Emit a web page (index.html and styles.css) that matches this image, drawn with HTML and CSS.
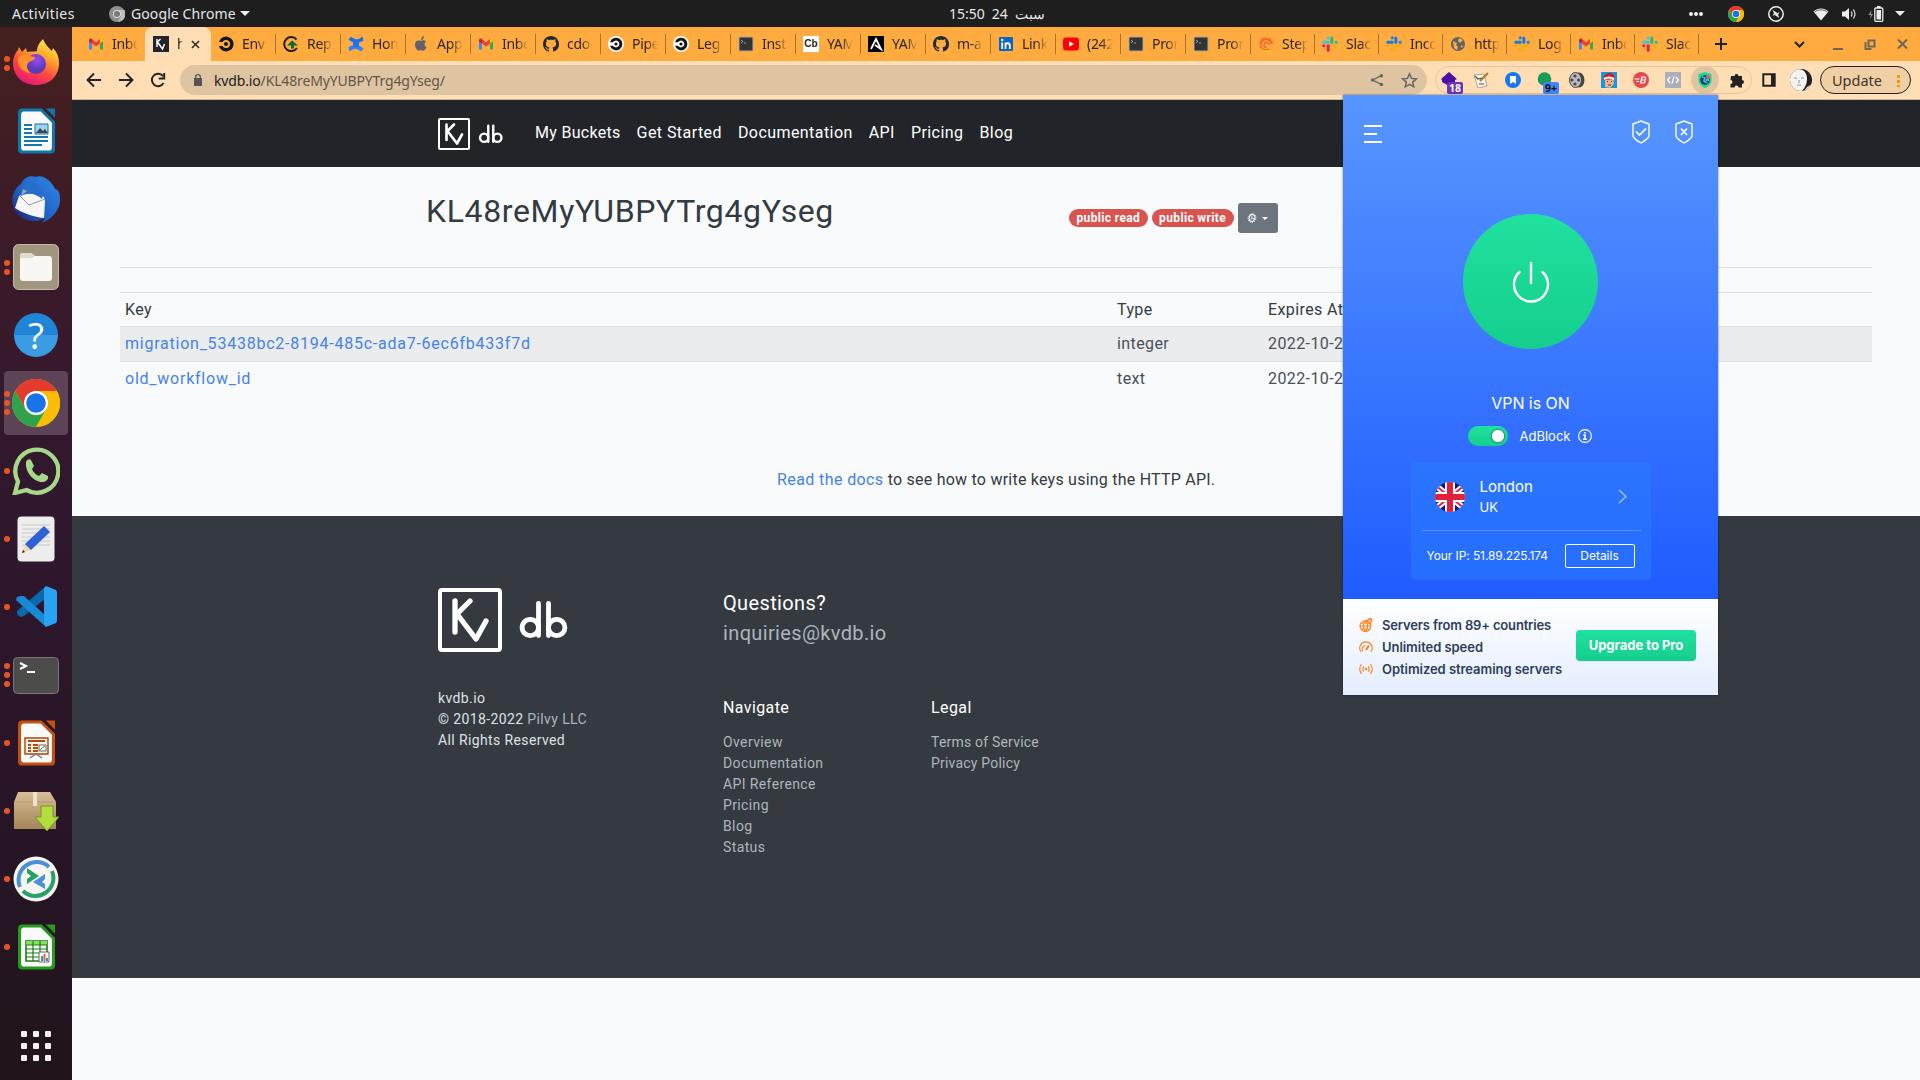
FILE: index.html
```html
<!DOCTYPE html>
<html lang="en">
<head>
<meta charset="utf-8">
<title>kvdb.io</title>
<link rel="stylesheet" href="styles.css">
</head>
<body>
<svg class="defs" aria-hidden="true">
  <defs>
    <linearGradient id="ff" x1=".8" y1="0" x2=".3" y2="1"><stop offset="0" stop-color="#fff44f"/><stop offset=".35" stop-color="#ffa72b"/><stop offset=".65" stop-color="#ff4a3d"/><stop offset="1" stop-color="#e3157b"/></linearGradient>
    <radialGradient id="ffp" cx=".55" cy=".3"><stop offset="0" stop-color="#a04bf5"/><stop offset="1" stop-color="#5a3bb8"/></radialGradient>
    <linearGradient id="tb" x1="1" y1="0" x2="0" y2="1"><stop offset="0" stop-color="#2f8ae8"/><stop offset=".6" stop-color="#1f5fc0"/><stop offset="1" stop-color="#20115a"/></linearGradient>
    <linearGradient id="box" x1="0" y1="0" x2="0" y2="1"><stop offset="0" stop-color="#d8bd96"/><stop offset="1" stop-color="#a5865a"/></linearGradient>
    <clipPath id="round"><circle cx="15" cy="15" r="15"/></clipPath>
    <clipPath id="face"><circle cx="11" cy="11" r="11"/></clipPath>
    <symbol id="gmail" viewBox="0 0 16 16"><path d="M1 4v9.5h3V6.5z" fill="#4285f4"/><path d="M15 4v9.5h-3V6.5z" fill="#34a853"/><path d="M1 4.2C1 2.4 3 2 4 3v4.6L1 5.5z" fill="#c5221f"/><path d="M15 4.2C15 2.400 13 2 12 3v4.600l3-2.100z" fill="#fbbc04"/><path d="M4 3l4 3.200L12 3v4.600L8 10.600 4 7.600z" fill="#ea4335"/></symbol>
    <symbol id="kv" viewBox="0 0 16 16"><rect width="16" height="16" fill="#212529"/><path d="M4 3v8M7.500 3L4.500 6l5 7L11.500 8" fill="none" stroke="#fff" stroke-width="1.500"/></symbol>
    <symbol id="circleci" viewBox="0 0 16 16"><path d="M1 6a7.400 7.400 0 1 1 0 4h3.400a4.100 4.100 0 1 0 0-4z" fill="#161616"/><circle cx="8" cy="8" r="2" fill="#161616"/></symbol>
    <symbol id="circlew" viewBox="0 0 16 16"><circle cx="8" cy="8" r="8" fill="#fff"/><path d="M2 6.300a6.300 6.300 0 1 1 0 3.400h3a3.400 3.400 0 1 0 0-3.400z" fill="#161616"/><circle cx="8" cy="8" r="1.600" fill="#161616"/></symbol>
    <symbol id="rep" viewBox="0 0 16 16"><path d="M13.500 3.500A7 7 0 1 0 14 12" fill="none" stroke="#222" stroke-width="2"/><path d="M4 9.500l5-5 6 5h-4v3H8v-3z" fill="#0b6b35"/></symbol>
    <symbol id="conf" viewBox="0 0 16 16"><path d="M.5 3.500L3 .5c4 3 6 4.500 11.500 0L15.500 4.500C9 8.500 5 7 .5 3.500z" fill="#1c6ee8"/><path d="M15.500 12.500L13 15.500c-4-3-6-4.500-11.500 0L.5 11.500c6.500-4 10.500-2.500 15 1z" fill="#2684ff"/><path d="M5 5h6v6H5z" fill="#1f74ef"/></symbol>
    <symbol id="apple" viewBox="0 0 16 16"><path d="M8 5c2-1.500 4-.8 5 .6-2.200 1.600-1.800 4.500.5 5.500-1 3-2.800 4.200-4 3.500-1-.5-1.800-.5-2.800 0C4 15.400 1 10.500 2.300 7 3.200 4.500 5.800 4 8 5zM8 4c0-2 1.200-3.500 3-4 .2 2-1.300 4-3 4z" fill="#62606a"/></symbol>
    <symbol id="github" viewBox="0 0 16 16"><path fill="#24292f" d="M8 0C3.580 0 0 3.580 0 8c0 3.540 2.290 6.530 5.470 7.590.4.070.55-.17.55-.38 0-.19-.01-.82-.01-1.490-2.010.37-2.530-.49-2.690-.94-.09-.23-.48-.94-.82-1.130-.28-.15-.68-.52-.01-.53.63-.01 1.080.58 1.230.82.72 1.210 1.870.87 2.330.66.070-.52.28-.87.51-1.070-1.780-.2-3.640-.89-3.640-3.950 0-.87.31-1.590.82-2.150-.08-.2-.36-1.020.08-2.120 0 0 .67-.21 2.200.82.64-.18 1.320-.27 2-.27s1.360.09 2 .27c1.530-1.040 2.200-.82 2.200-.82.44 1.100.16 1.920.08 2.120.51.56.82 1.270.82 2.150 0 3.070-1.870 3.750-3.650 3.950.29.25.54.73.54 1.480 0 1.070-.01 1.930-.01 2.200 0 .21.15.46.55.38A8.010 8.010 0 0 0 16 8c0-4.420-3.580-8-8-8z"/></symbol>
    <symbol id="termi" viewBox="0 0 16 16"><rect x="1" y="1" width="14" height="14" rx="1" fill="#333" stroke="#a9a9a0" stroke-width="1"/><path d="M3 4l2 1.500L3 7M6 7h2" fill="none" stroke="#bbb" stroke-width=".8"/></symbol>
    <symbol id="ans" viewBox="0 0 16 16"><rect width="16" height="16"/><path d="M3 13L8 3l5 10-6-4" fill="none" stroke="#fff" stroke-width="1.800"/></symbol>
    <symbol id="linkedin" viewBox="0 0 16 16"><rect x="1" y="1" width="14" height="14" rx="1" fill="#0a66c2"/><path d="M4.200 6.500V13M7.500 13V6.500M7.500 9.500c0-3 4.300-3 4.300 0V13" fill="none" stroke="#fff" stroke-width="1.800"/><circle cx="4.200" cy="4" r="1.200" fill="#fff"/></symbol>
    <symbol id="yt" viewBox="0 0 16 16"><rect y="1.500" width="16" height="13" rx="3" fill="#f00"/><path d="M6.200 5.200v5.600L11 8z" fill="#fff"/></symbol>
    <symbol id="grafana" viewBox="0 0 16 16"><path d="M8 1l2 1.500 2.500-.5.500 2.500L15.500 6l-1.500 2.500-1.500-.5a4.500 4.500 0 1 0-2 4.500l1.500 1c-3 2-7 1-8.500-1.500l-2-1 1-2.500L1 6l2-1 .5-3L6 2.500z" fill="#f4682a"/><path d="M11 9a2.500 2.500 0 1 0-2.500 2.500" fill="none" stroke="#f4682a" stroke-width="1.300"/><path d="M4 15.200h8" stroke="#ffd200" stroke-width="1.200"/></symbol>
    <symbol id="slack" viewBox="0 0 16 16"><g fill="none" stroke-width="3" stroke-linecap="round"><path d="M6.200 1.800v0M1.800 6.200h4.400" stroke="#36c5f0"/><path d="M9.800 2v4.200M14.200 6.200v0" stroke="#2eb67d"/><path d="M9.800 9.800h4.400M9.800 14.200v0" stroke="#ecb22e"/><path d="M6.200 9.800v4.400M1.800 9.800v0" stroke="#e01e5a"/></g></symbol>
    <symbol id="slackb" viewBox="0 0 16 16"><g fill="none" stroke-width="3" stroke-linecap="round"><path d="M6.200 1.800v0M1.800 6.200h4.400M9.800 2v4.200M14.200 6.200v0" stroke="#127be8"/><path d="M9.800 9.800h4.400M9.800 14.200v0M6.200 9.800v4.400M1.800 9.800v0" stroke="#eeb118"/></g></symbol>
    <symbol id="globe" viewBox="0 0 16 16"><circle cx="8" cy="8" r="7" fill="#5f6368"/><path d="M3 5l4 2-1 2 2 2-1 3-3-2zM9 2l4 2-3 3-2-2zM11 9l2.500 1-2 2z" fill="#ffab40"/></symbol>
    <symbol id="chrome" viewBox="0 0 48 48"><circle cx="24" cy="24" r="24" fill="#fbbc04"/><path d="M24 12h20.800A24 24 0 0 0 3.200 12l10.400 18z" fill="#e33b2e"/><path d="M3.200 12A24 24 0 0 0 24 48l10.400-18-10.400 6-10.400-6z" fill="#2fa24c"/><path d="M24 12h20.800A24 24 0 0 1 24 48l10.400-18z" fill="#fbbc04"/><circle cx="24" cy="24" r="12" fill="#fff"/><circle cx="24" cy="24" r="9.800" fill="#1a73e8"/></symbol>
    <symbol id="kvdb" viewBox="0 0 130 64"><rect x="2" y="2" width="60" height="60" rx="2" fill="none" stroke="#fff" stroke-width="4"/><g fill="none" stroke="#fff" stroke-width="5.300" stroke-linecap="round" stroke-linejoin="round"><path d="M17 13v31M32 13L19 26l19 25L48 33"/><g stroke-width="4.800"><circle cx="92.300" cy="39.500" r="8.200"/><path d="M100.500 15.500v32M110.500 15.500v32"/><circle cx="118.700" cy="39.500" r="8.200"/></g></g></symbol>
    <symbol id="doc" viewBox="0 0 36 44"><path d="M4 0h19l13 13v27a4 4 0 0 1-4 4H4a4 4 0 0 1-4-4V4a4 4 0 0 1 4-4z"/><path d="M27 0h9v9z"/><path d="M5 3h17l11 11v24a3 3 0 0 1-3 3H6a3 3 0 0 1-3-3V6a3 3 0 0 1 2-3z" fill="#fafafa"/></symbol>
  </defs>
</svg>
<div class="desktop">
  <header class="topbar">
    <span class="activities">Activities</span>
    <svg class="i16" viewBox="0 0 16 16"><circle cx="8" cy="8" r="8" fill="#8e8e8e"/><path d="M8 4h7.500A8 8 0 0 1 9 16l3-6z" fill="#bdbdbd"/><circle cx="8" cy="8" r="4" fill="#ddd"/><circle cx="8" cy="8" r="3" fill="#777"/></svg>
    <span class="appname">Google Chrome</span>
    <i class="caret"></i>
    <span class="clock"><span>15:50</span><span>24</span><span dir="rtl">سبت</span></span>
    <div class="tray">
      <svg class="t-dots" viewBox="0 0 16 16"><g fill="#eee"><circle cx="3" cy="8" r="2"/><circle cx="8" cy="8" r="2"/><circle cx="13" cy="8" r="2"/></g></svg>
      <svg class="t-chrome"><use href="#chrome"/></svg>
      <svg class="t-rem" viewBox="0 0 16 16"><circle cx="8" cy="8" r="7.200" fill="none" stroke="#eee" stroke-width="1.500"/><path d="M4.500 4l5 3-5 3 1.500-3zM11.500 6l-5 3 5 3-1.500-3z" fill="#eee"/></svg>
      <svg class="t-wifi" viewBox="0 0 16 16"><path d="M.5 5.500C4.500 1.500 11.500 1.500 15.500 5.500L8 14.500z" fill="#eee"/><path d="M1.500 6C5 3.200 11 3.200 14.500 6" fill="none" stroke="#555" stroke-width=".9"/></svg>
      <svg class="t-vol" viewBox="0 0 16 16"><path d="M1 5.500h3L8 2v12L4 10.500H1z" fill="#eee"/><path d="M10 5.500q2 2.500 0 5M12.300 3.500q3.400 4.500 0 9" fill="none" stroke="#ccc" stroke-width="1.300"/></svg>
      <svg class="t-bat" viewBox="0 0 16 16"><path d="M3.500 4L.5 9H3l-1 4 3-5H2.800z" fill="#999"/><rect x="6.800" y="2" width="8" height="13.300" rx="1" fill="none" stroke="#eee" stroke-width="1.300"/><path d="M8.500 4h4.600v9.500H8.500zM9 0h3.600v2H9z" fill="#eee"/></svg>
      <i class="caret"></i>
    </div>
  </header>
  <div class="below">
    <nav class="dock">
      <div class="app"><span class="dots"><i></i><i></i></span><svg class="up" width="46" height="46" viewBox="0 0 46 46"><path d="M23 46C9 46 0 36 0 24c0-5 2-10 5-13l1-3 3 5 4-4 1 4c5-1 8 0 10-1 0-5 3-9 6-12 3 7 6 9 9 12l1-3c4 4 6 9 6 15 0 13-9 22-23 22z" fill="url(#ff)"/><circle cx="23" cy="25" r="10" fill="url(#ffp)"/><path d="M5 19c4-4 8-4 11-2l6 1c0 3-4 4-6 5-4 4-1 9 1 11C9 33 4 27 5 19z" fill="#ff9328"/></svg></div>
      <div class="app"><svg width="37" height="46" fill="#0e76a8"><use href="#doc"/><path d="M6 17h8M6 21h8M6 25h8M6 29h24M6 33h24M6 37h18" stroke="#1477ad" stroke-width="1.800"/><path d="M17 16h13v10H17z" fill="#9fd4f0" stroke="#0e76a8"/><path d="M18 25l4-5 3 3 2-2 3 4z" fill="#444"/></svg></div>
      <div class="app"><svg width="48" height="48" viewBox="0 0 48 48"><path d="M9 9C12 2 18 0 24 2 30-1 40 6 43 14c5 1 5 7 5 12-1 10-8 18-18 22l3-5-8 3C12 47 1 40 0 25 1 18 4 12 9 9z" fill="url(#tb)"/><path d="M7 21c6-3 18-4 25 1l1 4-1 17C22 42 10 38 3 33z" fill="#f6f6f8"/><path d="M8 21l9 9 16-6" fill="none" stroke="#999" stroke-width="1"/><path d="M9 21C9 10 15 5 22 8c6 3 11 8 8 16-6-5-13-7-21-3z" fill="#256ec9"/><path d="M9 21l6-5-4-2z" fill="#9aa4b8"/></svg></div>
      <div class="app"><span class="dots"><i></i><i></i></span><svg width="46" height="46" viewBox="0 0 46 46"><rect x=".5" y=".5" width="45" height="45" rx="5" fill="#a0957f" stroke="#c3bba9"/><path d="M7 12q0-3 3-3h8l4 3h14q3 0 3 3v19q0 3-3 3H10q-3 0-3-3z" fill="#f8f7f4"/><path d="M7 12q0-3 3-3h8l4 3-3 2H7z" fill="#e2dccf"/></svg></div>
      <div class="app"><span class="help">?</span></div>
      <div class="app active"><span class="dots"><i></i><i></i><i></i></span><svg width="48" height="48"><use href="#chrome"/></svg></div>
      <div class="app"><span class="dots"><i></i></span><svg width="48" height="48" viewBox="0 0 48 48"><path d="M3 46l3-11.500A21.500 21.500 0 1 1 14.500 43z" fill="none" stroke="#a5d987" stroke-width="4.300"/><path d="M14 16c0-3 3-5 5-3l3 6-2 3c1 3 4 6 7 7l3-3 6 3c1 4-3 6-6 6-8 0-17-10-16-19z" fill="#a5d987"/></svg></div>
      <div class="app"><span class="dots"><i></i></span><svg width="38" height="46" viewBox="0 0 38 46"><rect x=".5" y=".5" width="37" height="45" rx="4" fill="#ededec"/><path d="M5 9h28M5 13h28M5 17h28M5 21h28M5 25h28M5 29h28" stroke="#c9c9c9"/><path d="M5 37l3-9 6 6z" fill="#f7d6b0"/><path d="M8 28L27 10l6 6-19 18z" fill="#2d61d8"/><path d="M5 37l1-3 2 2z" fill="#222"/></svg></div>
      <div class="app"><span class="dots"><i></i></span><svg width="43" height="42" viewBox="0 0 43 42"><path d="M31 0L2 25l0 3 3 3 4-1L31 12z" fill="#0a68ad"/><path d="M31 41L1 14l1-3 3-1 4 0 22 20z" fill="#168ad4"/><path d="M31 0l10 4q1 1 1 3v27q0 2-1 3l-10 4-2-3V3z" fill="#2aa2f4"/></svg></div>
      <div class="app"><span class="dots"><i></i><i></i><i></i></span><svg width="46" height="37" viewBox="0 0 46 37"><rect x=".5" y=".5" width="45" height="36" rx="4" fill="#4c4c4a" stroke="#777"/><path d="M7 6l6 3-6 3M14 15h8" fill="none" stroke="#fff" stroke-width="2"/></svg></div>
      <div class="app"><span class="dots"><i></i></span><svg width="37" height="46" fill="#c2500e"><use href="#doc"/><path d="M7 18h23v16H7z" fill="#fff4ea" stroke="#a8440c" stroke-width="1.400"/><path d="M10 21h17M10 25h3M10 28h3M10 31h3M15 25h5M15 28h5M15 31h5" stroke="#b34a10" stroke-width="2"/><path d="M21 25h7v6h-7z" fill="#fff" stroke="#666"/><path d="M22 30l2-2 3-2" fill="none" stroke="#2a9a3c"/><path d="M12 38l6-4 6 4" fill="none" stroke="#777" stroke-width="1.400"/></svg></div>
      <div class="app"><span class="dots"><i></i></span><svg width="46" height="40" viewBox="0 0 46 40"><path d="M5 1h32l6 10v27H1V11z" fill="url(#box)"/><path d="M1 11h42" stroke="#b59870"/><path d="M20 1h4v14h-4z" fill="#efe3cc"/><path d="M28 15h12v11h6L34 40 22 26h6z" fill="#b4dc3e" stroke="#6c9c1d"/></svg></div>
      <div class="app"><span class="dots"><i></i></span><svg width="46" height="46" viewBox="0 0 46 46"><circle cx="23" cy="23" r="22.500" fill="#f6f5f1"/><path d="M7 31A18 18 0 0 1 36 11" fill="none" stroke="#4a90d9" stroke-width="4"/><path d="M39 15A18 18 0 0 1 10 35" fill="none" stroke="#26a269" stroke-width="4"/><path d="M14 12l12 8-12 8v-5l4-3-4-3z" fill="#26a269"/><path d="M32 18l-12 8 12 7v-5l-3-2 3-3z" fill="#4a90d9"/></svg></div>
      <div class="app"><span class="dots"><i></i></span><svg width="37" height="46" fill="#259a1b"><use href="#doc"/><path d="M8 17h21v20H8z" fill="#fff" stroke="#1b7e12" stroke-width="1.600"/><path d="M8 17h21v4H8z" fill="#86e05e"/><path d="M8 21h21M8 25h21M8 29h21M8 33h21M15 17v20M22 17v20" stroke="#1b7e12" stroke-width="1.200"/><path d="M21 28h10v10H21z" fill="#fff" stroke="#666"/><path d="M24 37v-5M29 37v-3" stroke="#2a8fe0" stroke-width="2"/><path d="M26.500 37v-7" stroke="#e8601c" stroke-width="2"/></svg></div>
      <div class="grid9"><i></i><i></i><i></i><i></i><i></i><i></i><i></i><i></i><i></i></div>
    </nav>
    <div class="browser">
      <div class="tabs">
        <div class="tab first"><svg><use href="#gmail"/></svg><span>Inbox</span></div>
        <div class="tab current"><svg><use href="#kv"/></svg><span>h</span><svg class="x" viewBox="0 0 10 10"><path d="M1 1l8 8M9 1L1 9" stroke="#222" stroke-width="1.600"/></svg></div>
        <div class="tab"><svg><use href="#circleci"/></svg><span>Env</span></div>
        <div class="tab"><svg><use href="#rep"/></svg><span>Rep</span></div>
        <div class="tab"><svg><use href="#conf"/></svg><span>Hom</span></div>
        <div class="tab"><svg><use href="#apple"/></svg><span>App</span></div>
        <div class="tab"><svg><use href="#gmail"/></svg><span>Inbo</span></div>
        <div class="tab"><svg><use href="#github"/></svg><span>cdo</span></div>
        <div class="tab"><svg><use href="#circlew"/></svg><span>Pipe</span></div>
        <div class="tab"><svg><use href="#circlew"/></svg><span>Leg</span></div>
        <div class="tab"><svg><use href="#termi"/></svg><span>Inst</span></div>
        <div class="tab"><b class="cb">Cb</b><span>YAM</span></div>
        <div class="tab"><svg><use href="#ans"/></svg><span>YAM</span></div>
        <div class="tab"><svg><use href="#github"/></svg><span>m-a</span></div>
        <div class="tab"><svg><use href="#linkedin"/></svg><span>Link</span></div>
        <div class="tab"><svg><use href="#yt"/></svg><span>(242</span></div>
        <div class="tab"><svg><use href="#termi"/></svg><span>Pron</span></div>
        <div class="tab"><svg><use href="#termi"/></svg><span>Pron</span></div>
        <div class="tab n"><svg><use href="#grafana"/></svg><span>Step</span></div>
        <div class="tab n"><svg><use href="#slack"/></svg><span>Slac</span></div>
        <div class="tab n"><svg><use href="#slackb"/></svg><span>Inco</span></div>
        <div class="tab n"><svg><use href="#globe"/></svg><span>http</span></div>
        <div class="tab n"><svg><use href="#slackb"/></svg><span>Log</span></div>
        <div class="tab n"><svg><use href="#gmail"/></svg><span>Inbo</span></div>
        <div class="tab n"><svg><use href="#slack"/></svg><span>Slac</span></div>
        <svg class="plus" viewBox="0 0 12 12"><path d="M6 0v12M0 6h12" stroke="#222" stroke-width="2"/></svg>
        <svg class="wins" viewBox="0 0 114 16"><g fill="none" stroke="#6d6659" stroke-width="2"><path d="M1 6l4.500 4.500L10 6" stroke="#222"/><path d="M39 13h10M71.500 6v7h6M74.500 4.500h6v6h-6z"/><path d="M104 3.500l9 9M113 3.500l-9 9"/></g></svg>
      </div>
      <div class="toolbar">
        <svg class="nv" viewBox="0 0 16 16"><path d="M15 8H2M8 1.500L1.500 8 8 14.500"/></svg>
        <svg class="nv" viewBox="0 0 16 16"><path d="M1 8h13M8 1.500L14.500 8 8 14.500"/></svg>
        <svg class="nv" viewBox="0 0 16 16"><path d="M13.500 11A6.200 6.200 0 1 1 13 4.200M14.200 1v5.500H8.700"/></svg>
        <div class="omni">
          <svg width="10" height="12" viewBox="0 0 10 12"><rect x="1" y="4" width="8" height="8" fill="#555"/><path d="M2.700 4V2.700a2.300 2 0 0 1 4.600 0V4" fill="none" stroke="#555" stroke-width="1.300"/></svg>
          <span class="url"><b>kvdb.io</b>/KL48reMyYUBPYTrg4gYseg/</span>
          <svg class="share" viewBox="0 0 16 16"><path d="M13 3L3 8l10 5" fill="none" stroke="#666" stroke-width="1.500"/><g fill="#666"><circle cx="13" cy="3" r="2"/><circle cx="3" cy="8" r="2"/><circle cx="13" cy="13" r="2"/></g></svg>
          <svg class="star" viewBox="0 0 16 16"><path d="M8 1.800l1.900 4.200 4.500.5-3.400 3 1 4.500L8 11.700 4 14l1-4.500-3.400-3L6.100 6z" fill="none" stroke="#666" stroke-width="1.400"/></svg>
        </div>
        <div class="exts">
          <span><svg viewBox="0 0 16 16"><path d="M8 0l8 7-2 1v3L8 14 1 10V8L0 7z" fill="#4a0fa8"/></svg><em class="purple">18</em></span>
          <span><svg viewBox="0 0 16 16"><path d="M1 3l10-1 3 12-9 2z" fill="#f7f2e4" stroke="#888" stroke-width=".7"/><path d="M15 1L7 9" stroke="#b5761e" stroke-width="2" fill="none"/><path d="M2 4l3 3 4-1M6 12h5" stroke="#555" stroke-width="1.200" fill="none"/></svg></span>
          <span><svg viewBox="0 0 16 16"><circle cx="8" cy="8" r="8" fill="#1677f2"/><path d="M5 4h6v8L8 10l-3 2z" fill="#fff"/></svg></span>
          <span><svg viewBox="0 0 16 16"><circle cx="7.500" cy="7" r="6.800" fill="#179c58"/></svg><em class="blue">9+</em></span>
          <span><svg viewBox="0 0 16 16"><ellipse cx="10" cy="8" rx="5.500" ry="7.500" fill="#444"/><ellipse cx="6.500" cy="8" rx="6" ry="7.500" fill="#bbb" stroke="#444"/><g fill="#444"><circle cx="6" cy="4" r="1.600"/><circle cx="6" cy="12" r="1.600"/><circle cx="3" cy="8" r="1.500"/><circle cx="9.500" cy="8" r="1.500"/></g></svg></span>
          <span><svg viewBox="0 0 16 16"><rect width="16" height="16" fill="#1298e8"/><path d="M4 15V6h8l1 6-4 4z" fill="#f3b183"/><path d="M2 8C2 2 6 1 9 1s5 3 5 6z" fill="#d02027"/><path d="M3 7q5-3 10 0" stroke="#fff" stroke-width="2.200" fill="none"/><path d="M6 9.500h1M10 9.500h1M7 13h3" stroke="#632" stroke-width="1"/></svg></span>
          <span><svg viewBox="0 0 16 16"><circle cx="8" cy="8" r="8" fill="#e5484d"/><path d="M1.500 7h5M3 9.500h3M8 5h3.500c2 0 1 3-.5 3H8.500M11 8c2 0 1 3-.5 3H7.500L9 5" fill="none" stroke="#fff" stroke-width="1.200"/></svg></span>
          <span><svg viewBox="0 0 16 16"><rect width="16" height="16" fill="#a9b0ba"/><path d="M5 5L2.500 8 5 11M11 5l2.500 3L11 11M9 4.500l-2 7" fill="none" stroke="#fff" stroke-width="1.200"/></svg></span>
          <span class="hot"><svg viewBox="0 0 16 16"><path d="M8 0l6.500 2v6c0 4-3 6.500-6.500 8-3.500-1.500-6.500-4-6.500-8V2z" fill="#1ed89b"/><circle cx="8" cy="8" r="4.800" fill="#123d57"/><path d="M5 5l3 1-1 3 3 2M9 8h3" stroke="#29c8f0" stroke-width="1.800" fill="none"/><circle cx="11" cy="5" r="2" fill="#ff5a5a"/></svg></span>
          <span><svg viewBox="0 0 16 16"><path d="M2 4h3.500a2 2 0 1 1 4 0H13v4a2 2 0 1 1 0 4v3.500H9.500a2 2 0 0 0-4 0H1.500V12a2 2 0 0 0 0-4z" fill="#222"/></svg></span>
        </div>
        <svg class="side" viewBox="0 0 14 14"><path d="M1.300 1.300h11.400v11.400H1.300z" fill="none" stroke="#222" stroke-width="2"/><path d="M9 1h4v12H9z" fill="#222"/></svg>
        <svg class="avatar" viewBox="0 0 22 22"><g clip-path="url(#face)"><path d="M0 0h22v22H0z" fill="#202020"/><path d="M-1 0h10c6 1 8 5 8 10s-2 9-6 13H-1z" fill="#f3f3f3"/><path d="M17 18l5-3v7h-8z" fill="#ddd"/><path d="M4 9h3M11 9h3M7 16h4M9 11v3" stroke="#999" stroke-width="1.200"/></g></svg>
        <div class="update"><span>Update</span><i></i></div>
      </div>
      <main class="page">
        <header class="nav">
          <svg class="logo"><use href="#kvdb"/></svg>
          <a class="n1">My Buckets</a><a>Get Started</a><a>Documentation</a><a>API</a><a>Pricing</a><a>Blog</a>
        </header>
        <section class="head">
          <h1>KL48reMyYUBPYTrg4gYseg</h1>
          <div class="actions"><span class="badge">public read</span><span class="badge">public write</span><button class="gear"><svg width="10" height="10" viewBox="0 0 10 10"><g fill="none" stroke="#fff" transform="rotate(15 5 5)"><ellipse cx="5" cy="5" rx="2.800" ry="3.400"/><ellipse cx="5" cy="5" rx="3.900" ry="4.500" stroke-dasharray="1 1.200" stroke-width=".9"/><path d="M5 5h2.500M5 5L4 2.500M5 5L4 7.500" stroke-width=".7"/></g></svg><i></i></button></div>
        </section>
        <hr>
        <div class="table">
          <div class="row th"><span>Key</span><span>Type</span><span>Expires At</span></div>
          <div class="row odd"><a>migration_53438bc2-8194-485c-ada7-6ec6fb433f7d</a><span>integer</span><span>2022-10-24</span></div>
          <div class="row"><a>old_workflow_id</a><span>text</span><span>2022-10-24</span></div>
        </div>
        <p class="docs"><a>Read the docs</a> to see how to write keys using the HTTP API.</p>
        <footer class="foot">
          <div class="fcol brand">
            <svg class="flogo"><use href="#kvdb"/></svg>
            <p>kvdb.io<br>© 2018-2022 <a>Pilvy LLC</a><br><span>All Rights Reserved</span></p>
          </div>
          <div class="fright">
            <div class="ask">Questions?<br><a>inquiries@kvdb.io</a></div>
            <div class="links">
              <div class="lc"><h4>Navigate</h4><a>Overview</a><a>Documentation</a><a>API Reference</a><a>Pricing</a><a>Blog</a><a>Status</a></div>
              <div class="lc legal"><h4>Legal</h4><a>Terms of Service</a><a>Privacy Policy</a></div>
            </div>
          </div>
        </footer>
      </main>
    </div>
  </div>
  <aside class="vpn">
    <div class="vtop">
      <div class="vbar">
        <span class="burger"><i></i><i></i><i></i></span>
        <svg viewBox="0 0 18 24"><path d="M9 1l8 3v12q-1 3-8 7-7-4-8-7V4z"/><path d="M4 11.500l3.500 3.500L14 8.500" stroke-width="1.700"/></svg>
        <svg viewBox="0 0 18 24"><path d="M9 1l8 3v12q-1 3-8 7-7-4-8-7V4z"/><path d="M6 8.500l6 6.500M12 8.500L6 15" stroke-width="1.700"/></svg>
      </div>
      <div class="power"><svg width="38" height="42" viewBox="0 0 38 42"><path d="M19 2v20M7.500 11a17 17 0 1 0 23 0" fill="none" stroke="#fff" stroke-width="2.400" stroke-linecap="round"/></svg></div>
      <div class="status">VPN is ON</div>
      <div class="adb"><span class="tog"></span><span class="adt">AdBlock</span><svg width="14" height="14" viewBox="0 0 14 14"><circle cx="7" cy="7" r="6.400" fill="none" stroke="#fff" stroke-width="1.100"/><path d="M5.200 6H7v4M5 10.200h4M6.200 3.700h1.600" fill="none" stroke="#fff" stroke-width="1.500"/></svg></div>
      <div class="card">
        <div class="loc">
          <svg class="flag" width="30" height="30" viewBox="0 0 30 30"><g clip-path="url(#round)"><path fill="#10168c" d="M0 0h30v30H0z"/><path d="M0 3l30 24M0 27L30 3" stroke="#fff" stroke-width="6"/><path d="M0 3l30 24M0 27L30 3" stroke="#e0213c" stroke-width="1.800"/><path d="M15 0v30M0 15h30" stroke="#fff" stroke-width="10"/><path d="M15 0v30M0 15h30" stroke="#e0213c" stroke-width="6"/></g></svg>
          <div class="city"><span>London</span><small>UK</small></div>
          <svg width="9" height="15" viewBox="0 0 9 15"><path d="M1 1l7 6.500L1 14" fill="none" stroke="#a9c4ff" stroke-width="1.400"/></svg>
        </div>
        <div class="ip"><span>Your IP: 51.89.225.174</span><b>Details</b></div>
      </div>
    </div>
    <div class="vbot">
      <ul>
        <li><svg viewBox="0 0 14 14"><circle cx="6.500" cy="8" r="5.500"/><path d="M1 8h11M2 5h8M2 11h9M6.500 2.500q-4.500 5.500 0 11q4.500-5.500 0-11"/><path d="M8 3q3-4 5-1.500Q13 4 10.500 6z" fill="#ffb27a"/></svg><span class="s1">Servers from 89+ countries</span></li>
        <li><svg viewBox="0 0 14 14"><path d="M2 12a6.300 6.300 0 1 1 10 0M3.800 11.500a4 4 0 0 1 2-6"/><path d="M10 5.500L7 10" stroke-width="2.200"/></svg><span>Unlimited speed</span></li>
        <li><svg viewBox="0 0 14 14"><path d="M2.500 2q-3.500 5 0 10M11.500 2q3.500 5 0 10M4.800 4.300q-2 2.700 0 5.400M9.200 4.300q2 2.700 0 5.400"/><circle cx="7" cy="7" r=".8"/></svg><span>Optimized streaming servers</span></li>
      </ul>
      <div class="pro">Upgrade to Pro</div>
    </div>
  </aside>
</div>
</body>
</html>
```
FILE: styles.css
```css
* { box-sizing: border-box; }
body { margin: 0; font-family: Roboto, "Noto Sans", sans-serif; overflow: hidden; }
svg { display: block; flex: none; }
p, h1, h4, ul { margin: 0; padding: 0; font-weight: 400; }
.defs { position: absolute; width: 0; height: 0; }
.desktop { position: relative; width: 1920px; height: 1080px; display: flex; flex-direction: column; background: #f8fafc; }

.topbar { height: 27px; background: #1e1e1e; color: #e6e6e6; display: flex; align-items: center; padding-left: 12px; font: 14px/27px "Noto Sans", "Open Sans", sans-serif; }
.activities { width: 97px; letter-spacing: .45px; }
.i16 { width: 16px; height: 16px; margin-right: 6px; }
.appname { width: 109px; letter-spacing: .1px; }
.caret { border: 5px solid transparent; border-top-color: #eee; border-bottom: 0; }
.clock { margin-left: 699px; width: 100px; display: flex; gap: 7px; }
.tray { margin-left: auto; padding-right: 15px; display: flex; align-items: center; }
.tray svg { width: 16px; height: 16px; }
.t-chrome, .t-rem { margin-left: 24px; }
.tray .t-wifi { margin-left: 29px; }
.t-vol { margin-left: 12px; }
.t-bat { margin: 0 11px 0 11px; }

.below { display: flex; flex: 1; }
.dock { width: 72px; padding-top: 2px; background: linear-gradient(#45201f, #3a1a2a 25%, #2f172e 48%, #281526 75%, #20151c); display: flex; flex-direction: column; align-items: center; }
.app { position: relative; width: 64px; height: 64px; margin: 2px 0; border-radius: 4px; display: flex; align-items: center; justify-content: center; flex: none; }
.app.active { background: #5c4356; }
.app .up { margin-bottom: 2px; }
.dots { position: absolute; left: 0; top: 0; height: 100%; display: flex; flex-direction: column; justify-content: center; gap: 3px; }
.dots i { width: 6px; height: 6px; border-radius: 50%; background: #e95420; }
.help { width: 44px; height: 44px; border-radius: 50%; background: linear-gradient(#1f85d6 50%, #3a9ce2 50%); color: #fff; font: 37px/44px "Open Sans", sans-serif; text-align: center; }
.grid9 { margin-top: 50px; display: grid; grid-template-columns: repeat(3, 6px); gap: 6px; }
.grid9 i { height: 6px; border-radius: 1px; background: #f2f1ee; }

.browser { flex: 1; display: flex; flex-direction: column; font-family: "Noto Sans", "Open Sans", sans-serif; }
.tabs { height: 34px; background: #ffab40; display: flex; align-items: center; }
.tab { width: 65px; height: 20px; padding-left: 7px; border-right: 1px solid #a8742f; display: flex; align-items: center; gap: 8px; flex: none; color: #2a2620; font-size: 14px; }
.tab svg { width: 16px; height: 16px; }
.tab span { width: 26px; height: 24px; line-height: 23px; overflow: hidden; white-space: nowrap; letter-spacing: -.3px; -webkit-mask-image: linear-gradient(90deg, #000 55%, transparent); }
.tab.n { width: 64px; }
.tab.first { width: 73px; padding-left: 16px; border: 0; }
.tab.current { width: 66px; height: 34px; padding-left: 8px; background: #ffdeb5; border: 0; border-radius: 8px 8px 0 0; }
.tab.current span { width: 6px; }
.tab.current svg.x { width: 9px; height: 9px; }
.cb { width: 16px; height: 16px; background: #fff; font: bold 10px/16px "Liberation Sans", sans-serif; text-align: center; }
.plus { width: 12px; height: 12px; margin-left: 16px; }
.wins { width: 114px; height: 16px; margin-left: 67px; }
.toolbar { height: 39px; background: #ffdeb5; border-bottom: 1px solid #cdb596; display: flex; align-items: center; padding-left: 14px; }
.nv { width: 16px; height: 16px; margin-right: 16px; fill: none; stroke: #222; stroke-width: 1.9; }
.omni { width: 1247px; height: 30px; margin-left: -2px; border-radius: 15px; background: #dfc4a1; display: flex; align-items: center; padding-left: 13px; }
.url { margin-left: 11px; font-size: 14px; letter-spacing: -.15px; color: #5f574c; white-space: nowrap; }
.url b { font-weight: 400; color: #222; }
.share { width: 14px; height: 14px; margin-left: auto; }
.star { width: 17px; height: 17px; margin: 0 9px 0 17px; }
.exts { width: 317px; height: 28px; margin-left: 8px; border: 1px solid #e6c79e; border-radius: 14px; display: flex; align-items: center; }
.exts span { position: relative; width: 28px; height: 28px; margin: 0 4px 0 0; left: -1px; border-radius: 50%; display: flex; align-items: center; justify-content: center; flex: none; }
.exts span svg { width: 16px; height: 16px; }
.exts .hot { background: #dfc4a1; }
.exts em { position: absolute; left: 12px; top: 16px; width: 16px; height: 12px; border-radius: 2px; font: bold 10.5px/12px "Noto Sans", sans-serif; text-align: center; }
.purple { background: #6a35b8; color: #fff; }
.blue { background: #4285f4; color: #111; }
.side { width: 14px; height: 14px; margin-left: 10px; }
.avatar { width: 22px; height: 22px; margin-left: 14px; }
.update { width: 91px; height: 28px; margin-left: 8px; border: 1px solid #222; border-radius: 14px; background: #f1cfa6; display: flex; align-items: center; justify-content: space-between; padding: 0 10px 0 11px; font-size: 14.5px; color: #3c352c; }
.update i { width: 3px; height: 13px; background: radial-gradient(circle, #f29900 1.5px, transparent 1.8px) 0 0 / 3px 5px; }

.page { flex: 1; font-family: Roboto, sans-serif; color: #343a40; }
.nav { height: 67px; background: #212529; display: flex; align-items: center; padding-left: 366px; font-size: 16px; color: #fff; white-space: nowrap; }
.logo { width: 65px; height: 32px; margin: 1px 32px 0 0; }
.nav a { margin-right: 16px; padding-bottom: 2px; letter-spacing: .43px; }
.nav .n1 { letter-spacing: .3px; }
.head { height: 100px; padding: 22px 0 0 354px; display: flex; }
h1 { width: 643px; font-size: 32px; line-height: 44px; letter-spacing: .63px; }
.actions { padding-top: 14px; height: 44px; display: flex; align-items: center; }
.badge { height: 18px; margin-right: 4px; padding: 0 7.5px; border-radius: 9px; background: #d9534f; color: #fff; font-size: 12px; font-weight: 700; line-height: 18px; letter-spacing: .35px; }
.gear { width: 40px; height: 30px; border: 0; border-radius: 3px; background: #6c757d; display: flex; align-items: center; justify-content: center; gap: 5px; padding: 0; }
.gear i { border: 3px solid transparent; border-top-color: #fff; border-bottom: 0; }
hr { margin: 0 48px 24px; border: 0; height: 1px; background: #dee2e6; }
.table { margin: 0 48px; }
.row { display: grid; grid-template-columns: 992px 151px 1fr; height: 35px; border-top: 1px solid #dee2e6; font-size: 16px; line-height: 33px; color: #495057; letter-spacing: .4px; }
.row > * { padding-left: 5px; }
.row.th { height: 34px; color: #343a40; }
.odd { background: #ebecee; }
.row a, .docs a { color: #4582ec; }
.row a { letter-spacing: .76px; }
.docs { margin: 74px 0 0 705px; height: 46px; font-size: 16px; line-height: 20px; letter-spacing: .23px; }
.docs a { letter-spacing: .4px; }
.foot { height: 462px; background: #343a40; color: #fff; padding: 72px 0 0 366px; display: flex; }
.brand { width: 285px; font-size: 14px; line-height: 21px; color: #dee2e6; letter-spacing: .38px; }
.flogo { width: 130px; height: 64px; margin-bottom: 36px; }
.foot a { color: #adb5bd; }
.ask { height: 104px; font-size: 20px; line-height: 30px; letter-spacing: .36px; }
.links { display: flex; }
.lc { width: 208px; display: flex; flex-direction: column; font-size: 14px; line-height: 21px; letter-spacing: .38px; }
.legal { letter-spacing: .2px; }
h4 { font-size: 16px; line-height: 32px; margin-bottom: 8px; letter-spacing: .4px; }

.vpn { position: absolute; left: 1343px; top: 95px; width: 375px; height: 600px; box-shadow: 0 0 2px #0008; color: #fff; font-family: Inter, Lato, sans-serif; }
.vtop { height: 504px; background: linear-gradient(#5796ff, #205bff); display: flex; flex-direction: column; align-items: center; }
.vbar { width: 329px; padding-top: 25px; height: 119px; display: flex; align-items: flex-start; }
.burger { display: flex; flex-direction: column; gap: 6px; margin: 5px auto 0 -2px; width: 18px; }
.burger i { height: 2px; background: #fff; }
.burger i:nth-child(2) { width: 13px; }
.vbar svg { width: 18px; height: 24px; margin-right: 25px; fill: none; stroke: #fff; stroke-width: 1.4; }
.vbar svg:last-child { margin-right: 2px; }
.power { width: 135px; height: 135px; border-radius: 50%; background: linear-gradient(#21e19f, #15ce8e); display: flex; align-items: center; justify-content: center; }
.status { margin-top: 42px; height: 35px; font-size: 16px; line-height: 24px; font-weight: 400; letter-spacing: -.05px; }
.adb { height: 20px; display: flex; align-items: center; margin: 0 2px 16px 0; }
.tog { width: 40px; height: 20px; border-radius: 10px; background: radial-gradient(circle at 30px 10px, #fff 5.7px, #12a876 6.5px, transparent 8px), linear-gradient(#21e19f, #15ce8e); }
.adt { width: 52px; margin: 0 6px 0 12px; font-size: 13px; }
.card { width: 240px; height: 118px; border-radius: 5px; background: #277eff80; }
.loc { height: 69px; margin: 0 10px; padding: 0 14px; border-bottom: 1px solid #5a8dff; display: flex; align-items: center; }
.flag { margin-top: 1px; }
.city { margin: 0 auto 0 15px; display: flex; flex-direction: column; font-size: 15px; line-height: 21px; }
.city small { font-size: 13px; line-height: 20px; }
.ip { height: 49px; padding: 0 16px; display: flex; align-items: center; justify-content: space-between; font-size: 12px; white-space: nowrap; letter-spacing: -.08px; }
.ip b { width: 70px; height: 24px; border: 1px solid #fff; border-radius: 2px; font-weight: 400; line-height: 22px; text-align: center; letter-spacing: 0; }
.vbot { height: 96px; background: linear-gradient(#fff, #e4edff); display: flex; align-items: center; justify-content: space-between; padding: 0 22px 3px 16px; }
ul { list-style: none; padding-top: 2px; }
li { height: 22px; display: flex; align-items: center; gap: 9px; font-size: 13px; font-weight: 600; color: #2d3e5a; white-space: nowrap; letter-spacing: -.05px; }
.s1 { letter-spacing: -.16px; }
li svg { width: 14px; height: 14px; fill: none; stroke: #ff7f1a; stroke-width: 1.1; }
.pro { width: 120px; height: 31px; border-radius: 4px; background: linear-gradient(#21e19f, #15ce8e); font-size: 13px; font-weight: 700; line-height: 31px; text-align: center; }
```
